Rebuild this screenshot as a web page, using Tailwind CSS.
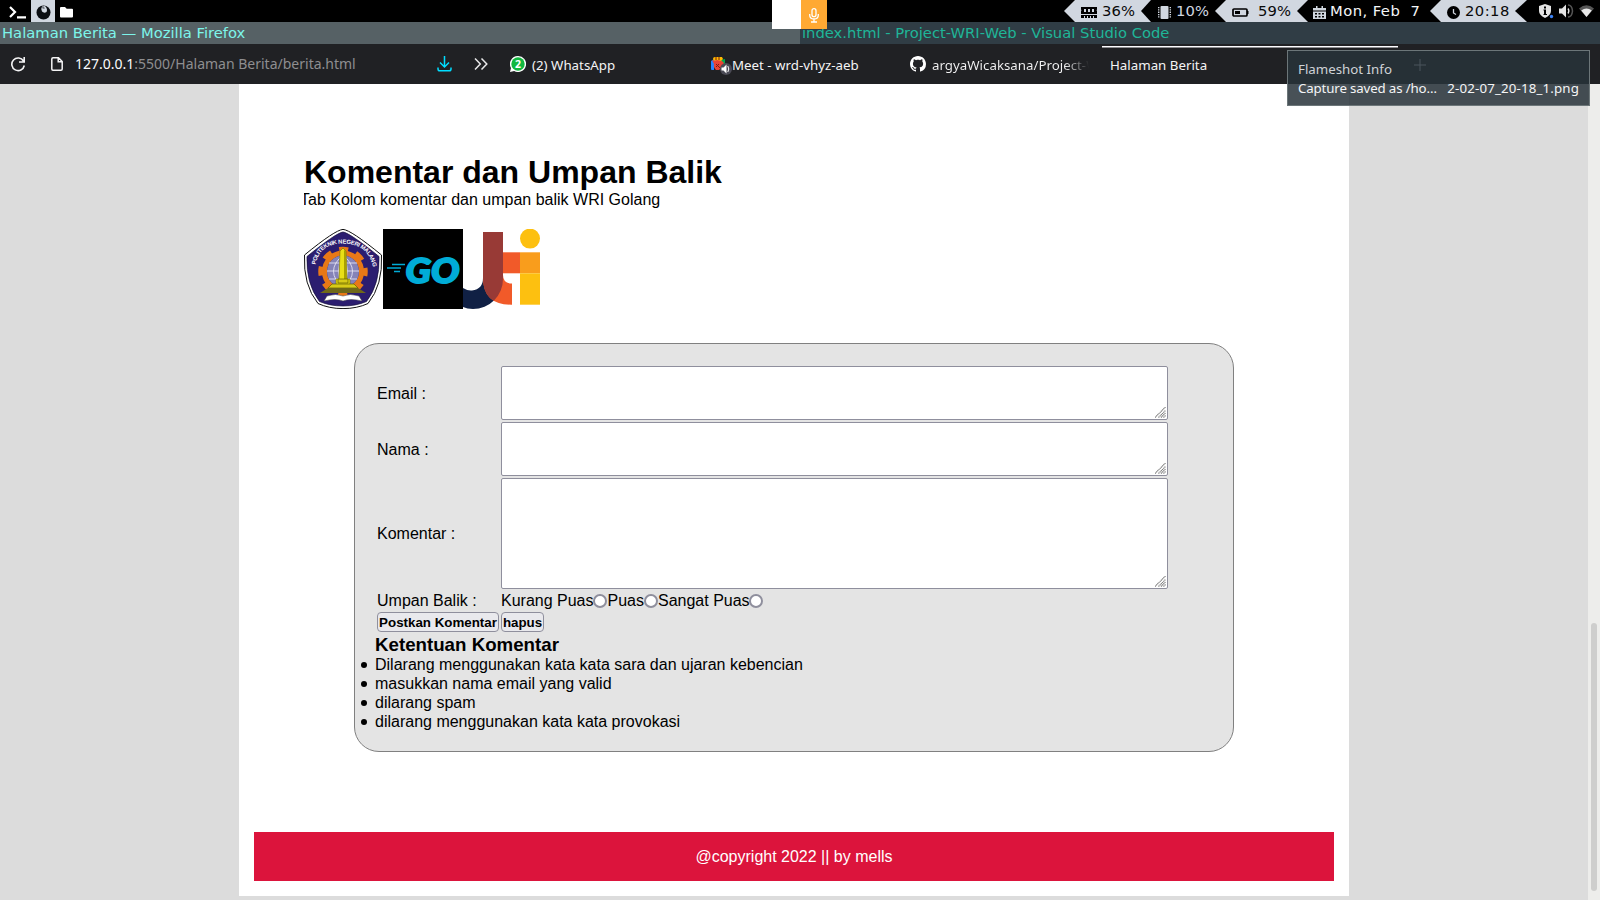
<!DOCTYPE html>
<html lang="id">
<head>
<meta charset="utf-8">
<title>Halaman Berita</title>
<script src="https://cdn.jsdelivr.net/npm/@tailwindcss/browser@4"></script>
</head>
<body class="w-[1600px] h-[900px] overflow-hidden bg-[#dcdcdc] text-black font-['Liberation_Sans',sans-serif] flex flex-col relative">

<!-- System bar -->
<header class="h-[22px] shrink-0 bg-black flex text-[14.750px] tracking-[0.150px] leading-[22px] font-['DejaVu_Sans',sans-serif] whitespace-pre">
  <div class="w-[31px] flex items-center pl-[9px]"><svg class="mt-[3px]" width="18" height="13" viewBox="0 0 18 13" fill="none" stroke="#fff" stroke-width="2.2"><path d="M1 1l5 5-5 5M8 11.3h9"/></svg></div>
  <div class="w-6 bg-[#d1d7e0] flex items-center justify-center"><svg class="mt-[2px]" width="15" height="15" viewBox="0 0 15 15"><circle cx="7.5" cy="7.5" r="7" fill="#0b0e12"/><path d="M6 1.5Q4.500 4 6 6.500Q8 8.500 10.500 7Q12 4 9 1Z" fill="#d1d7e0"/><path d="M6.500 1.500Q9 1.500 8.500 4Q7 4 6 3Z" fill="#6b7078"/></svg></div>
  <div class="w-[717px] flex items-center pl-[5px]"><svg class="mt-[2px]" width="13" height="11" viewBox="0 0 13 11"><path fill="#fff" d="M1 0h4l1.700 1.800H12q1 0 1 1V9.500q0 1-1 1H1q-1 0-1-1V1q0-1 1-1z"/></svg></div>
  <div class="w-[292px]"></div>
  <svg class="shrink-0" width="11" height="22" viewBox="0 0 11 22"><path d="M0 11L11 0V22Z" fill="#d1d7e0"/></svg>
  <div class="w-[66px] bg-[#d1d7e0] flex items-center pl-[6px] text-[#0a0a0a]">
    <svg class="mr-[5px] mt-[2px] shrink-0" width="16" height="11" viewBox="0 0 16 11"><path fill="#000" d="M0 0h16v2.500q-1 .5 0 1.500V7H0V4q1-1 0-1.500zM0 8h16v3H0z"/><path fill="#d1d7e0" d="M3 2h2v3H3zM7 2h2v3H7zM11 2h2v3h-2zM3 9h1v2H3zM6 9h1v2H6zM9 9h1v2H9zM12 9h1v2h-1z"/></svg>36%</div>
  <svg class="shrink-0 bg-[#d1d7e0]" width="10" height="22" viewBox="0 0 10 22"><path d="M0 11L10 0V22Z" fill="#000"/></svg>
  <div class="w-[64px] flex items-center pl-[7px] text-[#d1d7e0]">
    <svg class="mr-[5px] mt-[3px] shrink-0" width="13" height="13" viewBox="0 0 13 13"><rect x="2.500" width="8" height="13" rx="1" fill="#d1d7e0"/><path stroke="#d1d7e0" stroke-dasharray="1.300 1" d="M.7 1v11M12.300 1v11" stroke-width="1.400"/></svg>10%</div>
  <svg class="shrink-0" width="11" height="22" viewBox="0 0 11 22"><path d="M0 11L11 0V22Z" fill="#d1d7e0"/></svg>
  <div class="w-[71px] bg-[#d1d7e0] flex items-center pl-[6px] text-[#0a0a0a]">
    <svg class="mr-[9px] mt-[2px] shrink-0" width="17" height="9" viewBox="0 0 17 9"><rect x="1" y="1" width="14" height="7" rx="1" fill="none" stroke="#000" stroke-width="1.700"/><path d="M3 3h5v3H3zM15 3h1.500v3H15z"/></svg>59%</div>
  <svg class="shrink-0 bg-[#d1d7e0]" width="11" height="22" viewBox="0 0 11 22"><path d="M0 11L11 0V22Z" fill="#000"/></svg>
  <div class="w-[122px] flex items-center pl-[5px] text-[#f4f6f8]">
    <svg class="mr-[4px] mt-[3px] shrink-0" width="13" height="13" viewBox="0 0 13 13"><path fill="#d1d7e0" d="M1 2h2V0h1.500v2h4V0H10v2h3v2.500H0V2zM0 5.500h13V13H0z"/><path fill="#000" d="M2 7h2v1.500H2zM5.500 7h2v1.500h-2zM9 7h2v1.500H9zM2 10h2v1.500H2zM5.500 10h2v1.500h-2zM9 10h2v1.500H9z"/></svg><span class="tracking-[0.450px]">Mon, Feb  7</span></div>
  <svg class="shrink-0" width="11" height="22" viewBox="0 0 11 22"><path d="M0 11L11 0V22Z" fill="#d1d7e0"/></svg>
  <div class="w-[74px] bg-[#d1d7e0] flex items-center pl-[6px] text-[#0a0a0a]">
    <svg class="mr-[5px] mt-[2px] shrink-0" width="13" height="13" viewBox="0 0 13 13"><circle cx="6.500" cy="6.500" r="6.500"/><path d="M6.500 3v4l2.500 1.500" stroke="#d1d7e0" fill="none" stroke-width="1.300"/></svg><span class="tracking-[0.450px]">20:18</span></div>
  <svg class="shrink-0 bg-[#d1d7e0]" width="12" height="22" viewBox="0 0 12 22"><path d="M0 11L12 0V22Z" fill="#000"/></svg>
  <div class="flex items-center gap-[5px] pl-[12px]">
    <svg class="shrink-0" width="15" height="15" viewBox="0 0 15 15"><path fill="#e4e4e4" d="M6 0l6 2v5q0 4-6 7Q0 11 0 7V2z"/><path fill="#000" d="M5 2.500h2v2H5zM4.500 5.500H7V10h1v1H4.500v-1H5V6.500h-.5z"/><circle cx="12.500" cy="12.500" r="1.700" fill="#3b82f6"/></svg>
    <svg class="shrink-0" width="15" height="14" viewBox="0 0 15 14"><path fill="#e4e4e4" d="M0 4.500h3L7 .5v13l-4-4H0z"/><path fill="none" stroke="#e4e4e4" stroke-width="1.300" d="M9 4.500q1.800 2.500 0 5"/><path fill="none" stroke="#555" stroke-width="1.500" d="M9 1q4 0 4.500 6-.5 6-4.500 6"/></svg>
    <svg class="shrink-0" width="15" height="12" viewBox="0 0 15 12"><path fill="#555" d="M0 3.500Q7.500-3 15 3.500L7.500 12z"/><path fill="#e8e8e8" d="M2.200 5.500q5.300-4 10.600 0L7.500 12z"/></svg>
  </div>
</header>

<!-- Window titles -->
<div class="h-[22px] shrink-0 flex text-[14.750px] leading-[22px] font-['DejaVu_Sans',sans-serif] whitespace-pre">
  <div class="w-[800px] bg-[#566165] text-[#7df5ea] pl-[2px]">Halaman Berita — Mozilla Firefox</div>
  <div class="w-[800px] bg-[#303d45] text-[#1fb598] pl-[2px]">index.html - Project-WRI-Web - Visual Studio Code</div>
</div>

<!-- Browser toolbar -->
<nav class="h-10 shrink-0 bg-[#202124] flex items-center text-[13.3px] text-[#f4f4f5] font-['Noto_Sans',sans-serif] whitespace-pre">
  <div class="w-[51px] pl-[10px]"><svg width="16" height="16" viewBox="0 0 16 16" fill="none" stroke="#f4f4f5" stroke-width="1.600"><path d="M13.500 5A6.300 6.300 0 1 0 14.300 9.500M14.200 1v5H9"/></svg></div>
  <div class="w-[24px]"><svg width="12" height="14" viewBox="0 0 12 14" fill="none" stroke="#f4f4f5" stroke-width="1.500"><path d="M2 .8h5.500L11.200 4.500V12q0 1.200-1.200 1.200H2Q.8 13.200.8 12V2Q.8.8 2 .8zM7.200 1v3.800H11"/></svg></div>
  <div class="w-[362px] pb-[2px] text-[14px] text-[#8e8e90]"><span class="text-[#fbfbfe]">127.0.0.1</span>:5500/Halaman Berita/berita.html</div>
  <div class="w-[37px]"><svg width="15" height="16" viewBox="0 0 15 16" fill="none" stroke="#00ddff" stroke-width="1.500"><path d="M7.500 0v10.500M3 6.500l4.500 4.500L12 6.500M1 11.500v1.500q0 1.800 1.800 1.800h9.400q1.800 0 1.800-1.800v-1.500"/></svg></div>
  <div class="w-[36px]"><svg width="14" height="12" viewBox="0 0 14 12" fill="none" stroke="#e8e8e9" stroke-width="1.500"><path d="M1 .5L6.300 6 1 11.500M7.500 .5L12.800 6 7.500 11.500"/></svg></div>
  <div class="w-[200px] flex items-center gap-[6px]"><svg width="16" height="16" viewBox="0 0 16 16"><path fill="#fff" d="M8 0a8 8 0 1 1-3.800 15L0 16l1-4A8 8 0 0 1 8 0z"/><circle cx="8" cy="8" r="6.700" fill="#12b83f"/><text x="8" y="11.800" text-anchor="middle" font-family="Noto Sans" font-weight="700" font-size="10.500" fill="#fff">2</text></svg><span class="pt-[3px]">(2) WhatsApp</span></div>
  <div class="w-[200px] flex items-center"><svg class="mt-[3px]" width="22" height="20" viewBox="0 0 22 20"><path fill="#2684fc" d="M1 5l3-2v11H2q-1 0-1-1z"/><path fill="#00a94b" d="M10 4l5-1v7h-5z"/><path fill="#ffba00" d="M3 3q0-2 2-2h7l1 2-2 2H4z"/><path fill="#e94335" d="M2 4q2 1 5 0l5 1 2 2-2 4-3 3H6q-3-3-2-6z"/><path stroke="#7a1c14" stroke-width="1" d="M6 1v3M9 1v3M6 8l4 4M6 11l3-3"/><circle cx="16" cy="13" r="6" fill="#4a4a55"/><path fill="#fff" d="M11.500 11.500h2l3-3v9l-3-3h-2z"/><path fill="none" stroke="#fff" d="M17.800 10q2 3 0 6"/></svg><span class="pt-[3px]">Meet - wrd-vhyz-aeb</span></div>
  <div class="w-[192px] flex items-center gap-[6px]"><svg class="shrink-0" width="16" height="16" viewBox="0 0 16 16"><path fill="#fff" d="M8 0C3.580 0 0 3.580 0 8c0 3.540 2.290 6.530 5.470 7.590.4.070.55-.17.55-.38 0-.19-.01-.82-.01-1.490-2.010.37-2.530-.49-2.690-.94-.09-.23-.48-.94-.82-1.130-.28-.15-.68-.52-.01-.53.63-.01 1.080.58 1.230.82.720 1.210 1.870.87 2.330.66.070-.52.280-.87.510-1.070-1.780-.2-3.640-.89-3.640-3.950 0-.87.310-1.590.82-2.150-.08-.2-.36-1.020.08-2.120 0 0 .67-.21 2.200.82.640-.18 1.320-.27 2-.27s1.360.09 2 .27c1.530-1.040 2.200-.82 2.200-.82.440 1.100.16 1.920.08 2.120.51.560.82 1.270.82 2.150 0 3.070-1.870 3.750-3.650 3.950.29.250.54.730.54 1.480 0 1.070-.01 1.930-.01 2.200 0 .21.150.46.550.38A8.010 8.010 0 0 0 16 8c0-4.420-3.580-8-8-8z"/></svg><span class="pt-[3px] w-[157px] overflow-hidden bg-linear-to-r from-[#f4f4f5] from-84% to-transparent bg-clip-text text-transparent">argyaWicaksana/Project-W</span></div>
  <div class="w-[296px] h-full border-t-2 border-transparent pl-[8px] flex items-center bg-[linear-gradient(#fbfbfe,#fbfbfe)] bg-[length:100%_1.500px] bg-no-repeat bg-[position:0_0]"><span class="pt-[2px]">Halaman Berita</span></div>
</nav>

<!-- Page viewport -->
<div class="flex h-[816px]">
  <main class="ml-[239px] w-[1110px] h-[812px] bg-white px-[15px] flex flex-col">
    <section class="pl-[50px] pt-[70px]">
      <h1 class="text-[32px] leading-[36px] font-bold">Komentar dan Umpan Balik</h1>
      <div class="overflow-hidden"><p class="pt-px text-[16px] leading-[18px] -indent-[4px]">Tab Kolom komentar dan umpan balik WRI Golang</p></div>
      <div class="mt-[20px] flex">
        <svg class="mr-px" width="78" height="80" viewBox="0 0 78 80">
          <path d="M39 .4Q47 1 77.500 26Q79 56 64 74.500Q53 79.600 39 79.600Q25 79.600 14 74.500Q-1 56 .5 26Q31 1 39 .4z" fill="#fff" stroke="#111" stroke-width="1"/>
          <path d="M39 3Q46 4 75 27.500Q76 55 62.500 72.500Q52 77 39 77Q26 77 15.500 72.500Q2 55 3 27.500Q32 4 39 3z" fill="#2b1d70" stroke="#15103c" stroke-width=".7"/>
          <circle cx="39" cy="42.500" r="18.500" fill="none" stroke="#e87817" stroke-width="5"/>
          <circle cx="39" cy="42.500" r="22" fill="none" stroke="#e87817" stroke-width="5.500" stroke-dasharray="9 8.280" stroke-dashoffset="4.500"/>
          <circle cx="39" cy="42.500" r="16" fill="#8583b8"/>
          <path d="M23 42h32M25 34h28M25 50h28M39 26v34M39 26q-19 16 0 33M39 26q19 16 0 33M39 26q-9 16 0 33M39 26q9 16 0 33" fill="none" stroke="#eeeefa" stroke-width=".8"/>
          <path d="M36 22l3-3 3 3 1 28h3v7H32v-7h3z" fill="#e9df16" stroke="#756b00" stroke-width=".6"/><path d="M40 21l2 1 1 28h-3z" fill="#a9a000"/>
          <path d="M34 50h10v4H34zM28 55h22l4 4H24z" fill="#d8cb18" stroke="#635b00" stroke-width=".7"/>
          <path d="M24 59h30l8 5H16z" fill="#706918"/>
          <path d="M23 67q9-3 16 0 7-3 16 0l3 5q-12-3-19 0-7-3-19 0z" fill="#fff" stroke="#444" stroke-width=".5"/>
          <path id="crest" d="M11.500 36Q15 15 39 14.500Q63 15 68.500 36" fill="none"/>
          <text font-family="Liberation Sans" font-weight="700" font-size="5.800" fill="#fff"><textPath href="#crest" textLength="80" startOffset="0">POLITEKNIK NEGERI MALANG</textPath></text>
        </svg>
        <svg class="bg-black" width="80" height="80" viewBox="0 0 80 80"><path d="M9 35.500h13M4 39h14M11 42.500h6" stroke="#00acd7" stroke-width="1.500"/><text x="22.500" y="53.500" textLength="54" lengthAdjust="spacingAndGlyphs" font-family="Lato" font-weight="900" font-style="italic" font-size="34" fill="#00acd7" stroke="#00acd7" stroke-width="1.800" stroke-linejoin="round">GO</text></svg>
        <svg width="78" height="80" viewBox="0 0 78 80">
          <defs><clipPath id="j"><path d="M20 3H40V50A30 30 0 0 1 10 80Q4 80 0 78V59Q5 62 9 61.500Q20 60 20 49z"/></clipPath></defs>
          <path d="M20 3H40V50A30 30 0 0 1 10 80Q4 80 0 78V59Q5 62 9 61.500Q20 60 20 49z" fill="#102044"/>
          <path d="M20 3H40V46Q40 54.500 49 54.500V75.700Q20 76 20 49z" fill="#f15a29"/>
          <path d="M20 3H40V46Q40 54.500 49 54.500V75.700Q20 76 20 49z" fill="#983a36" clip-path="url(#j)"/>
          <path d="M40 23.300h17v21H40z" fill="#f15a29"/><path d="M57 23.300h20v21H57z" fill="#f99d1c"/><path d="M57 44.300h20v31.400H57z" fill="#fdc010"/>
          <circle cx="67" cy="9.600" r="10" fill="#fdc010"/>
        </svg>
      </div>
    </section>

    <form class="ml-[100px] mt-[34px] w-[880px] h-[409px] rounded-[25px] border border-[#808080] bg-[#e4e4e4] pl-[20px] pt-[22px] text-[16px] leading-[18px]">
      <div class="pl-[2px] grid grid-cols-[124px_667px] gap-y-[2px] items-center">
        <label class="pt-[2px]">Email :</label>
        <div class="h-[54px] bg-white border border-[#8f8f9d] rounded-[2px] flex items-end justify-end p-[1px]"><svg width="11" height="11" viewBox="0 0 11 11" stroke="#777" stroke-width="1.100" stroke-dasharray="1.200 .5"><path d="M0 10.500L10.500 0M3.500 10.500l7-7M6 10.500L10.500 6M8.500 10.500l2-2"/></svg></div>
        <label class="pt-[2px]">Nama :</label>
        <div class="h-[54px] bg-white border border-[#8f8f9d] rounded-[2px] flex items-end justify-end p-[1px]"><svg width="11" height="11" viewBox="0 0 11 11" stroke="#777" stroke-width="1.100" stroke-dasharray="1.200 .5"><path d="M0 10.500L10.500 0M3.500 10.500l7-7M6 10.500L10.500 6M8.500 10.500l2-2"/></svg></div>
        <label>Komentar :</label>
        <div class="h-[111px] bg-white border border-[#8f8f9d] rounded-[2px] flex items-end justify-end p-[1px]"><svg width="11" height="11" viewBox="0 0 11 11" stroke="#777" stroke-width="1.100" stroke-dasharray="1.200 .5"><path d="M0 10.500L10.500 0M3.500 10.500l7-7M6 10.500L10.500 6M8.500 10.500l2-2"/></svg></div>
        <label>Umpan Balik :</label>
        <div class="flex items-center h-[19px]">Kurang Puas<i class="-ml-px mr-px size-[14px] rounded-full bg-white border-2 border-[#8f8f9d]"></i>Puas<i class="size-[14px] rounded-full bg-white border-2 border-[#8f8f9d]"></i>Sangat Puas<i class="-ml-px size-[14px] rounded-full bg-white border-2 border-[#8f8f9d]"></i></div>
      </div>
      <div class="pl-[2px] mt-[2px] flex gap-[2px] text-[13.333px] leading-[18px] font-bold">
        <button type="button" class="w-[122px] h-5 pt-px border border-[#8f8f9d] rounded-[4px] bg-[#e9e9ed] whitespace-nowrap">Postkan Komentar</button>
        <button type="button" class="w-[43px] h-5 pt-px border border-[#8f8f9d] rounded-[4px] bg-[#e9e9ed]">hapus</button>
      </div>
      <h3 class="mt-[2px] text-[18.720px] leading-[21px] font-bold">Ketentuan Komentar</h3>
      <ul class="leading-[19px]">
        <li class="-ml-[14px] flex items-center gap-[8px]"><i class="size-[5.500px] mr-[0.500px] mt-px rounded-full bg-black"></i>Dilarang menggunakan kata kata sara dan ujaran kebencian</li>
        <li class="-ml-[14px] flex items-center gap-[8px]"><i class="size-[5.500px] mr-[0.500px] mt-px rounded-full bg-black"></i>masukkan nama email yang valid</li>
        <li class="-ml-[14px] flex items-center gap-[8px]"><i class="size-[5.500px] mr-[0.500px] mt-px rounded-full bg-black"></i>dilarang spam</li>
        <li class="-ml-[14px] flex items-center gap-[8px]"><i class="size-[5.500px] mr-[0.500px] mt-px rounded-full bg-black"></i>dilarang menggunakan kata kata provokasi</li>
      </ul>
    </form>

    <footer class="mt-[80px] h-[49px] bg-[#dc143c] text-white text-[16px] flex items-center justify-center">@copyright 2022 || by mells</footer>
  </main>
  <div class="ml-auto w-3 bg-[#ededeb] pl-[3px] pt-[539px]"><div class="w-[6px] h-[268px] rounded-full bg-[#cececd]"></div></div>
</div>

<!-- Recording indicator -->
<div class="absolute left-[772px] top-0 flex h-[29px]">
  <div class="w-[29px] bg-white"></div>
  <div class="w-[26px] bg-[#ffa933] flex items-center justify-center"><svg class="mt-px" width="10" height="15" viewBox="0 0 10 15" fill="none" stroke="#fff" stroke-width="1.300"><rect x="3" y=".7" width="4" height="8" rx="2"/><path d="M.7 6v1q0 4 4.300 4t4.300-4V6M5 11v3M2 14h6"/></svg></div>
</div>

<!-- Notification -->
<aside class="absolute left-[1287px] top-[50px] w-[303px] h-[56px] border border-[#6c7679] bg-[#283339]/85 px-[10px] pt-[9px] text-[13.300px] leading-[19px] font-['Noto_Sans',sans-serif]">
  <div class="text-[#cfd3d6]">Flameshot Info</div>
  <div class="flex justify-between text-[#f4f5f6] whitespace-nowrap"><span class="tracking-[-0.150px]">Capture saved as /ho…</span><span class="tracking-[0.150px]">2-02-07_20-18_1.png</span></div>
  <svg class="absolute left-[126px] top-[8px]" width="12" height="12" viewBox="0 0 12 12" stroke="#4b555c"><path d="M6 0v12M0 6h12"/></svg>
</aside>
</body>
</html>
